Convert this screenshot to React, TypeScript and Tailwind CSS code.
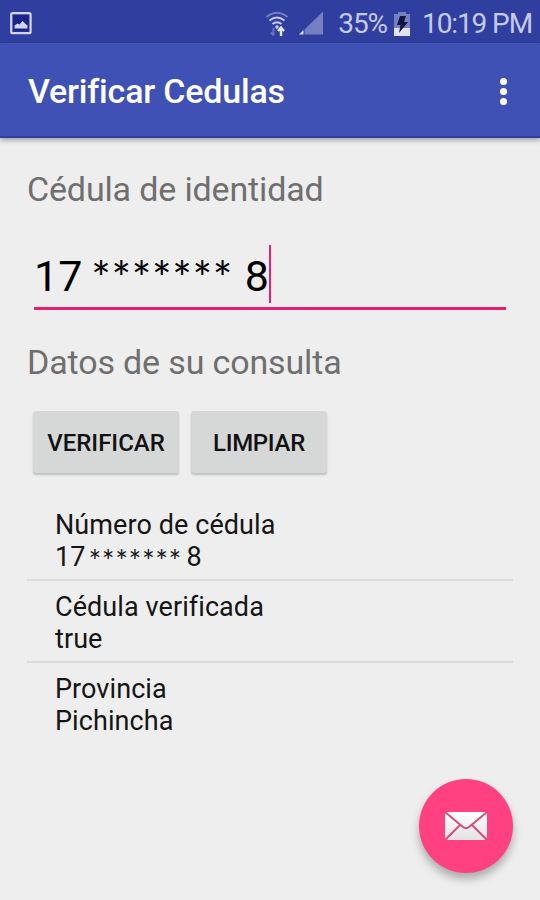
const results = [
  { label: "Cédula verificada", value: "true" },
  { label: "Provincia", value: "Pichincha" },
];

function StatusBar() {
  return (
    <div className="flex h-[43px] items-center bg-[#303f9f] pt-[4px] text-[#c5cae9]">
      <svg className="ml-[10px]" width="22" height="24" viewBox="0 0 22 24" fill="none">
        <rect x="1.2" y="1.2" width="19.4" height="20" rx="1.5" stroke="#d0d4ee" strokeWidth="2.2" />
        <rect x="3" y="3" width="15.8" height="16.4" fill="#1c2588" />
        <path d="M4.5 16.5v-3l3-2 2 1 3-3.500 2.500 2.500 2.500 2v3z" fill="#d0d4ee" />
      </svg>
      <svg className="ml-auto" width="24" height="26" viewBox="0 0 24 26" fill="none" stroke="#a9b1dc" strokeWidth="2">
        <path d="M1.5 6Q12-2.500 22.500 6" stroke="#7480c2" />
        <path d="M4.5 9.5q7.500-6 15 0M7.500 13q4.500-3.500 9 0" stroke="#c5cae9" />
        <circle cx="12" cy="16" r="1.800" fill="#c5cae9" stroke="none" />
        <path d="M8.500 17v7.500M6 21.500l2.500 3" stroke="#6974bb" />
        <path d="M16 25v-8M13 20l3-3.500 3 3.500" stroke="#e8eafa" strokeWidth="2.400" />
      </svg>
      <svg className="ml-[10px]" width="25" height="25" viewBox="0 0 25 25">
        <path d="M24 .5v23H5.500v-5z" fill="#7480c2" />
        <path d="M4.500 19v4.500H0z" fill="#d9dcf1" />
      </svg>
      <span className="ml-[14px] text-[28px] leading-none tracking-[-1.1px] whitespace-nowrap">35%</span>
      <svg className="ml-[6px]" width="18" height="26" viewBox="0 0 18 26">
        <path d="M5 1h8v2h4v22H1V3h4z" fill="#7480c2" />
        <path d="M1 17h16v8H1z" fill="#dfe2f4" />
        <path d="M7 5h6l-2 6h4L6 22l1.500-8H4z" fill="#11163f" />
      </svg>
      <span className="mr-[8px] ml-[11px] text-[28px] leading-none tracking-[-1.1px] whitespace-nowrap">10:19 PM</span>
    </div>
  );
}

function Toolbar() {
  return (
    <header className="relative flex h-[95px] items-center justify-between border-b-2 border-[#303f9f] bg-[#3f51b5] pt-[3px] pr-[33px] pl-[28px] shadow-[0_2px_5px_rgba(0,0,0,0.35)]">
      <h1 className="text-[34px] leading-none font-medium tracking-[-0.2px] text-white">Verificar Cedulas</h1>
      <div className="flex flex-col gap-[3px]">
        <span className="size-[7px] rounded-full bg-white" />
        <span className="size-[7px] rounded-full bg-white" />
        <span className="size-[7px] rounded-full bg-white" />
      </div>
    </header>
  );
}

export default function App() {
  return (
    <div className="relative h-[900px] w-[540px] overflow-hidden bg-[#eeeeee] font-[Roboto,sans-serif]">
      <StatusBar />
      <Toolbar />

      <main className="px-[27px] pt-[31px]">
        <p className="text-[34px] leading-[40px] tracking-[-0.15px] text-[#6f6f6f]">Cédula de identidad</p>

        <div className="mr-[7px] ml-[7px] mt-[36px] flex h-[65px] items-start border-b-[3px] border-[#e91e70]">
          <div className="flex h-[58px] w-[237px] items-center border-r-2 border-[#e91e70] pt-[4px] text-[43px] text-black">
            <span>17</span>
            <span className="ml-[9px] pt-[2px] font-[Lato,sans-serif] text-[46px] tracking-[0.7px]">*******</span>
            <span className="ml-auto">8</span>
          </div>
        </div>

        <p className="mt-[32px] text-[34px] leading-[40px] tracking-[-0.15px] text-[#6f6f6f]">Datos de su consulta</p>

        <div className="mt-[29px] ml-[6px] flex gap-[12px]">
          <button className="h-[62px] w-[146px] rounded-[3px] bg-[#d6d7d7] pt-px text-[24px] font-medium text-[#111] shadow-[0_2px_2px_rgba(0,0,0,0.2)]">
            VERIFICAR
          </button>
          <button className="h-[62px] w-[136px] rounded-[3px] bg-[#d6d7d7] pt-px text-[24px] font-medium tracking-[-0.3px] text-[#111] shadow-[0_2px_2px_rgba(0,0,0,0.2)]">
            LIMPIAR
          </button>
        </div>

        <ul className="mt-[26px] text-[27px] leading-[32px] tracking-[0.08px] text-[#151515]">
          <li className="h-[82px] border-b-2 border-[#dadada] pt-[10px] pl-[28px]">
            <p>Número de cédula</p>
            <p className="flex">
              <span>17</span>
              <span className="ml-[3px] w-[92px] pt-[3px] font-[Lato,sans-serif] text-[30px] tracking-[0.6px]">*******</span>
              <span className="ml-[6px]">8</span>
            </p>
          </li>
          {results.map((item) => (
            <li key={item.label} className="h-[82px] border-b-2 border-[#dadada] pt-[10px] pl-[28px] last:border-0">
              <p>{item.label}</p>
              <p>{item.value}</p>
            </li>
          ))}
        </ul>
      </main>

      <button
        aria-label="Enviar correo"
        className="absolute right-[27px] bottom-[27px] flex size-[94px] items-center justify-center rounded-full bg-[#ff4081] shadow-[0_6px_9px_rgba(0,0,0,0.28)]"
      >
        <svg width="44" height="30" viewBox="0 0 44 30">
          <defs>
            <linearGradient id="paper" x1="0" y1="0" x2="0" y2="1">
              <stop offset="0" stopColor="#fff" />
              <stop offset="1" stopColor="#e2e2e2" />
            </linearGradient>
          </defs>
          <rect x="1" y="1" width="42" height="28" rx="1" fill="url(#paper)" />
          <path d="M1 1l18 15q3 2.500 6 0L43 1M1 29l15-15M43 29L28 14" fill="none" stroke="#e0447c" strokeWidth="1.800" />
        </svg>
      </button>
    </div>
  );
}
